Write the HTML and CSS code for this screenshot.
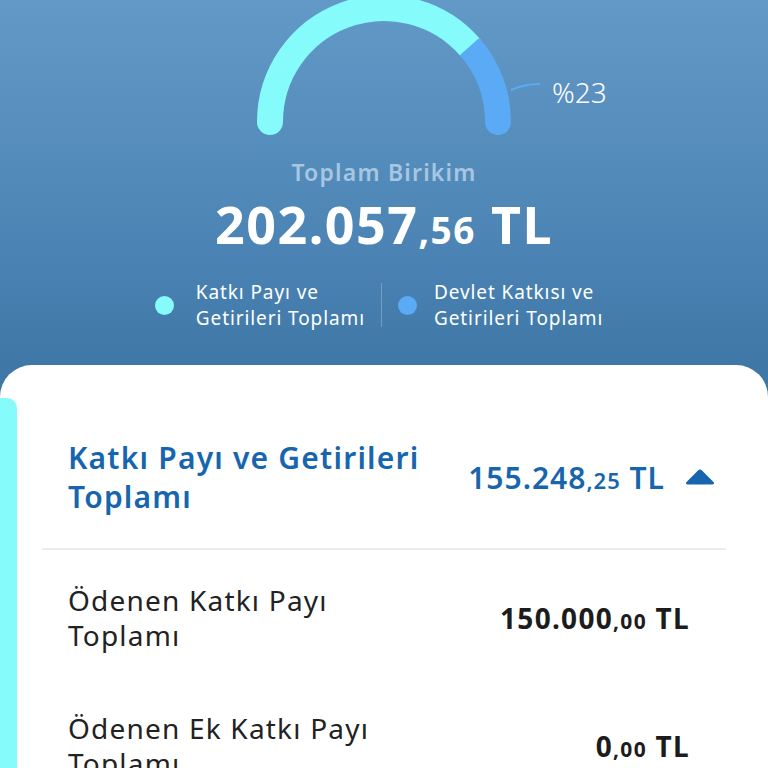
FILE: index.html
```html
<!DOCTYPE html>
<html lang="tr">
  <head>
    <meta charset="UTF-8" />
    <meta name="viewport" content="width=device-width, initial-scale=1.0" />
    <title>Toplam Birikim</title>
    <link rel="stylesheet" href="styles.css">
  </head>
  <body>
    <div class="page">
      <header class="hero">
        <svg class="gauge" width="768" height="140" viewBox="0 0 768 140">
          <path d="M270 122 A114 114 0 0 1 469.5 46.6" fill="none" stroke="#86fbfb" stroke-width="26" stroke-linecap="round" />
          <path d="M469.5 46.6 A114 114 0 0 1 498 122" fill="none" stroke="#5aaaf6" stroke-width="26" stroke-linecap="butt" />
          <circle cx="498" cy="122" r="13" fill="#5aaaf6" />
          <path d="M511 90 Q524 84 540 84" fill="none" stroke="#5aaaf6" stroke-width="2" />
          <text x="552" y="103" class="gauge-label">%23</text>
        </svg>

        <p class="total-label">Toplam Birikim</p>
        <p class="total-amount">202.057<span class="dec">,56</span> TL</p>

        <div class="legend">
          <div class="legend-item">
            <span class="dot dot-cyan"></span>
            <span>Katkı Payı ve<br />Getirileri Toplamı</span>
          </div>
          <span class="legend-sep"></span>
          <div class="legend-item">
            <span class="dot dot-blue"></span>
            <span>Devlet Katkısı ve<br />Getirileri Toplamı</span>
          </div>
        </div>
      </header>

      <section class="card">
        <div class="card-bar"></div>
        <div class="card-body">
          <div class="group-head">
            <h2>Katkı Payı ve Getirileri<br />Toplamı</h2>
            <div class="group-amount">
              <span>155.248<span class="dec">,25</span> TL</span>
              <svg width="32" height="18" viewBox="0 0 32 18">
                <path d="M14 2.5 Q16 0.5 18 2.5 L29.5 14 Q31 16.5 28 16.5 L4 16.5 Q1 16.5 2.5 14 Z" fill="#1766ad" />
              </svg>
            </div>
          </div>

          <div class="row">
            <p class="row-label">Ödenen Katkı Payı<br />Toplamı</p>
            <p class="row-value">150.000<span class="dec">,00</span> TL</p>
          </div>

          <div class="row">
            <p class="row-label">Ödenen Ek Katkı Payı<br />Toplamı</p>
            <p class="row-value">0<span class="dec">,00</span> TL</p>
          </div>
        </div>
      </section>
    </div>
  </body>
</html>
```

FILE: styles.css
```css
* {
  margin: 0;
  padding: 0;
  box-sizing: border-box;
  font-family: "Noto Sans", "Open Sans", sans-serif;
}

body {
  background-color: #4079a8;
  overflow: hidden;
}

.page {
  min-height: 768px;
  background: linear-gradient(180deg, #6399c7 0%, #4b84b4 250px, #3f78a7 365px);
}

.hero {
  height: 365px;
  display: flex;
  flex-direction: column;
  align-items: center;
}

.gauge {
  display: block;
  flex-shrink: 0;
}

.gauge-label {
  font-family: "Noto Sans", sans-serif;
  font-size: 28px;
  font-weight: 300;
  fill: #ffffff;
}

.total-label {
  margin-top: 17px;
  font-size: 23px;
  font-weight: 600;
  letter-spacing: 1.2px;
  color: #a7c6e2;
  line-height: 30px;
}

.total-amount {
  margin-top: 7px;
  font-size: 52px;
  font-weight: 700;
  letter-spacing: 1.5px;
  color: #ffffff;
  line-height: 60px;
}

.total-amount .dec {
  font-size: 37px;
}

.legend {
  margin-top: 19px;
  display: flex;
  align-items: center;
  gap: 16px;
  color: #ffffff;
  font-size: 19px;
  letter-spacing: 0.9px;
  line-height: 26px;
}

.legend-item {
  display: flex;
  align-items: center;
  gap: 17px;
}

.legend-item:first-child {
  margin-left: -10px;
  gap: 22px;
}

.dot {
  width: 19px;
  height: 19px;
  border-radius: 50%;
}

.dot-cyan {
  background-color: #86fbfb;
}

.dot-blue {
  background-color: #5aaaf6;
}

.legend-sep {
  width: 1px;
  height: 44px;
  background-color: rgba(255, 255, 255, 0.25);
}

.card {
  background-color: #ffffff;
  border-radius: 32px 32px 0 0;
  min-height: 403px;
  display: flex;
  padding-top: 33px;
}

.card-bar {
  width: 17px;
  flex-shrink: 0;
  background-color: #86fbfb;
  border-top-right-radius: 10px;
}

.card-body {
  flex: 1;
  padding: 0 42px 0 25px;
}

.group-head {
  display: flex;
  align-items: center;
  justify-content: space-between;
  padding: 40px 10px 32px 26px;
  border-bottom: 2px solid #ececec;
}

.group-head h2 {
  font-size: 30px;
  font-weight: 600;
  letter-spacing: 1.2px;
  line-height: 39px;
  color: #1766ad;
}

.group-amount {
  display: flex;
  align-items: center;
  gap: 19px;
  font-size: 30px;
  font-weight: 600;
  color: #1766ad;
  letter-spacing: 1px;
}

.group-amount .dec {
  font-size: 22px;
}

.row {
  display: flex;
  align-items: center;
  justify-content: space-between;
  padding: 33px 36px 0 26px;
}

.row + .row {
  padding-top: 58px;
}

.row-label {
  font-size: 28px;
  font-weight: 400;
  letter-spacing: 1.2px;
  line-height: 35px;
  color: #222222;
}

.row-value {
  font-size: 28px;
  font-weight: 700;
  letter-spacing: 1.3px;
  color: #1c1c1c;
}

.row-value .dec {
  font-size: 21px;
}
```
